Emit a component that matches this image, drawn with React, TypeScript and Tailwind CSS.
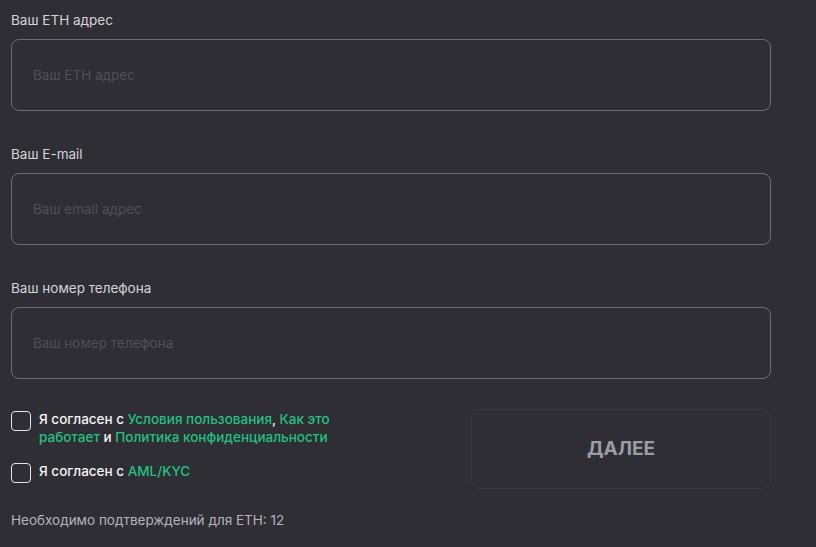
import React from 'react';

const Field = ({ label, placeholder }: { label: string; placeholder: string }) => (
  <div className="flex flex-col">
    <label className="text-[13.5px] leading-[16px] text-[#d4d4d8] mb-[11px]">{label}</label>
    <input
      placeholder={placeholder}
      className="h-[72px] w-[760px] rounded-[8px] border border-[#6b6b72] bg-transparent px-[21px] text-[13.5px] text-[#d4d4d8] placeholder:text-[#4f4f57] outline-none"
    />
  </div>
);

const Checkbox = () => (
  <span className="mt-[1px] block h-[20px] w-[20px] shrink-0 rounded-[4px] border-[1.5px] border-[#e4e4e7]" />
);

export default function App() {
  return (
    <div
      className="min-h-[547px] w-full bg-[#2f2e34] pl-[11px] pt-[12px]"
      style={{ fontFamily: 'Inter, "Noto Sans", sans-serif' }}
    >
      <div className="flex flex-col gap-[35px]">
        <Field label="Ваш ETH адрес" placeholder="Ваш ETH адрес" />
        <Field label="Ваш E-mail" placeholder="Ваш email адрес" />
        <Field label="Ваш номер телефона" placeholder="Ваш номер телефона" />
      </div>

      <div className="mt-[30px] flex w-[760px] justify-between">
        <div className="flex flex-col gap-[16px] pt-[1px]">
          <div className="flex items-start gap-[8px]">
            <Checkbox />
            <p className="text-[13.5px] leading-[18px] font-medium text-[#f4f4f5] w-[310px]">
              Я согласен с <span className="text-[#20c281]">Условия пользования</span>,{' '}
              <span className="text-[#20c281]">Как это работает</span> и{' '}
              <span className="text-[#20c281]">Политика конфиденциальности</span>
            </p>
          </div>
          <div className="flex items-start gap-[8px]">
            <Checkbox />
            <p className="text-[13.5px] leading-[18px] font-medium text-[#f4f4f5]">
              Я согласен с <span className="text-[#20c281]">AML/KYC</span>
            </p>
          </div>
        </div>
        <button className="h-[80px] w-[300px] rounded-[8px] border border-[#2f3d3a] text-[19px] font-bold text-[#9c9ca3]">
          ДАЛЕЕ
        </button>
      </div>

      <p className="mt-[23px] text-[13.5px] leading-[16px] text-[#b4b4bb]">
        Необходимо подтверждений для ETH: 12
      </p>
    </div>
  );
}
